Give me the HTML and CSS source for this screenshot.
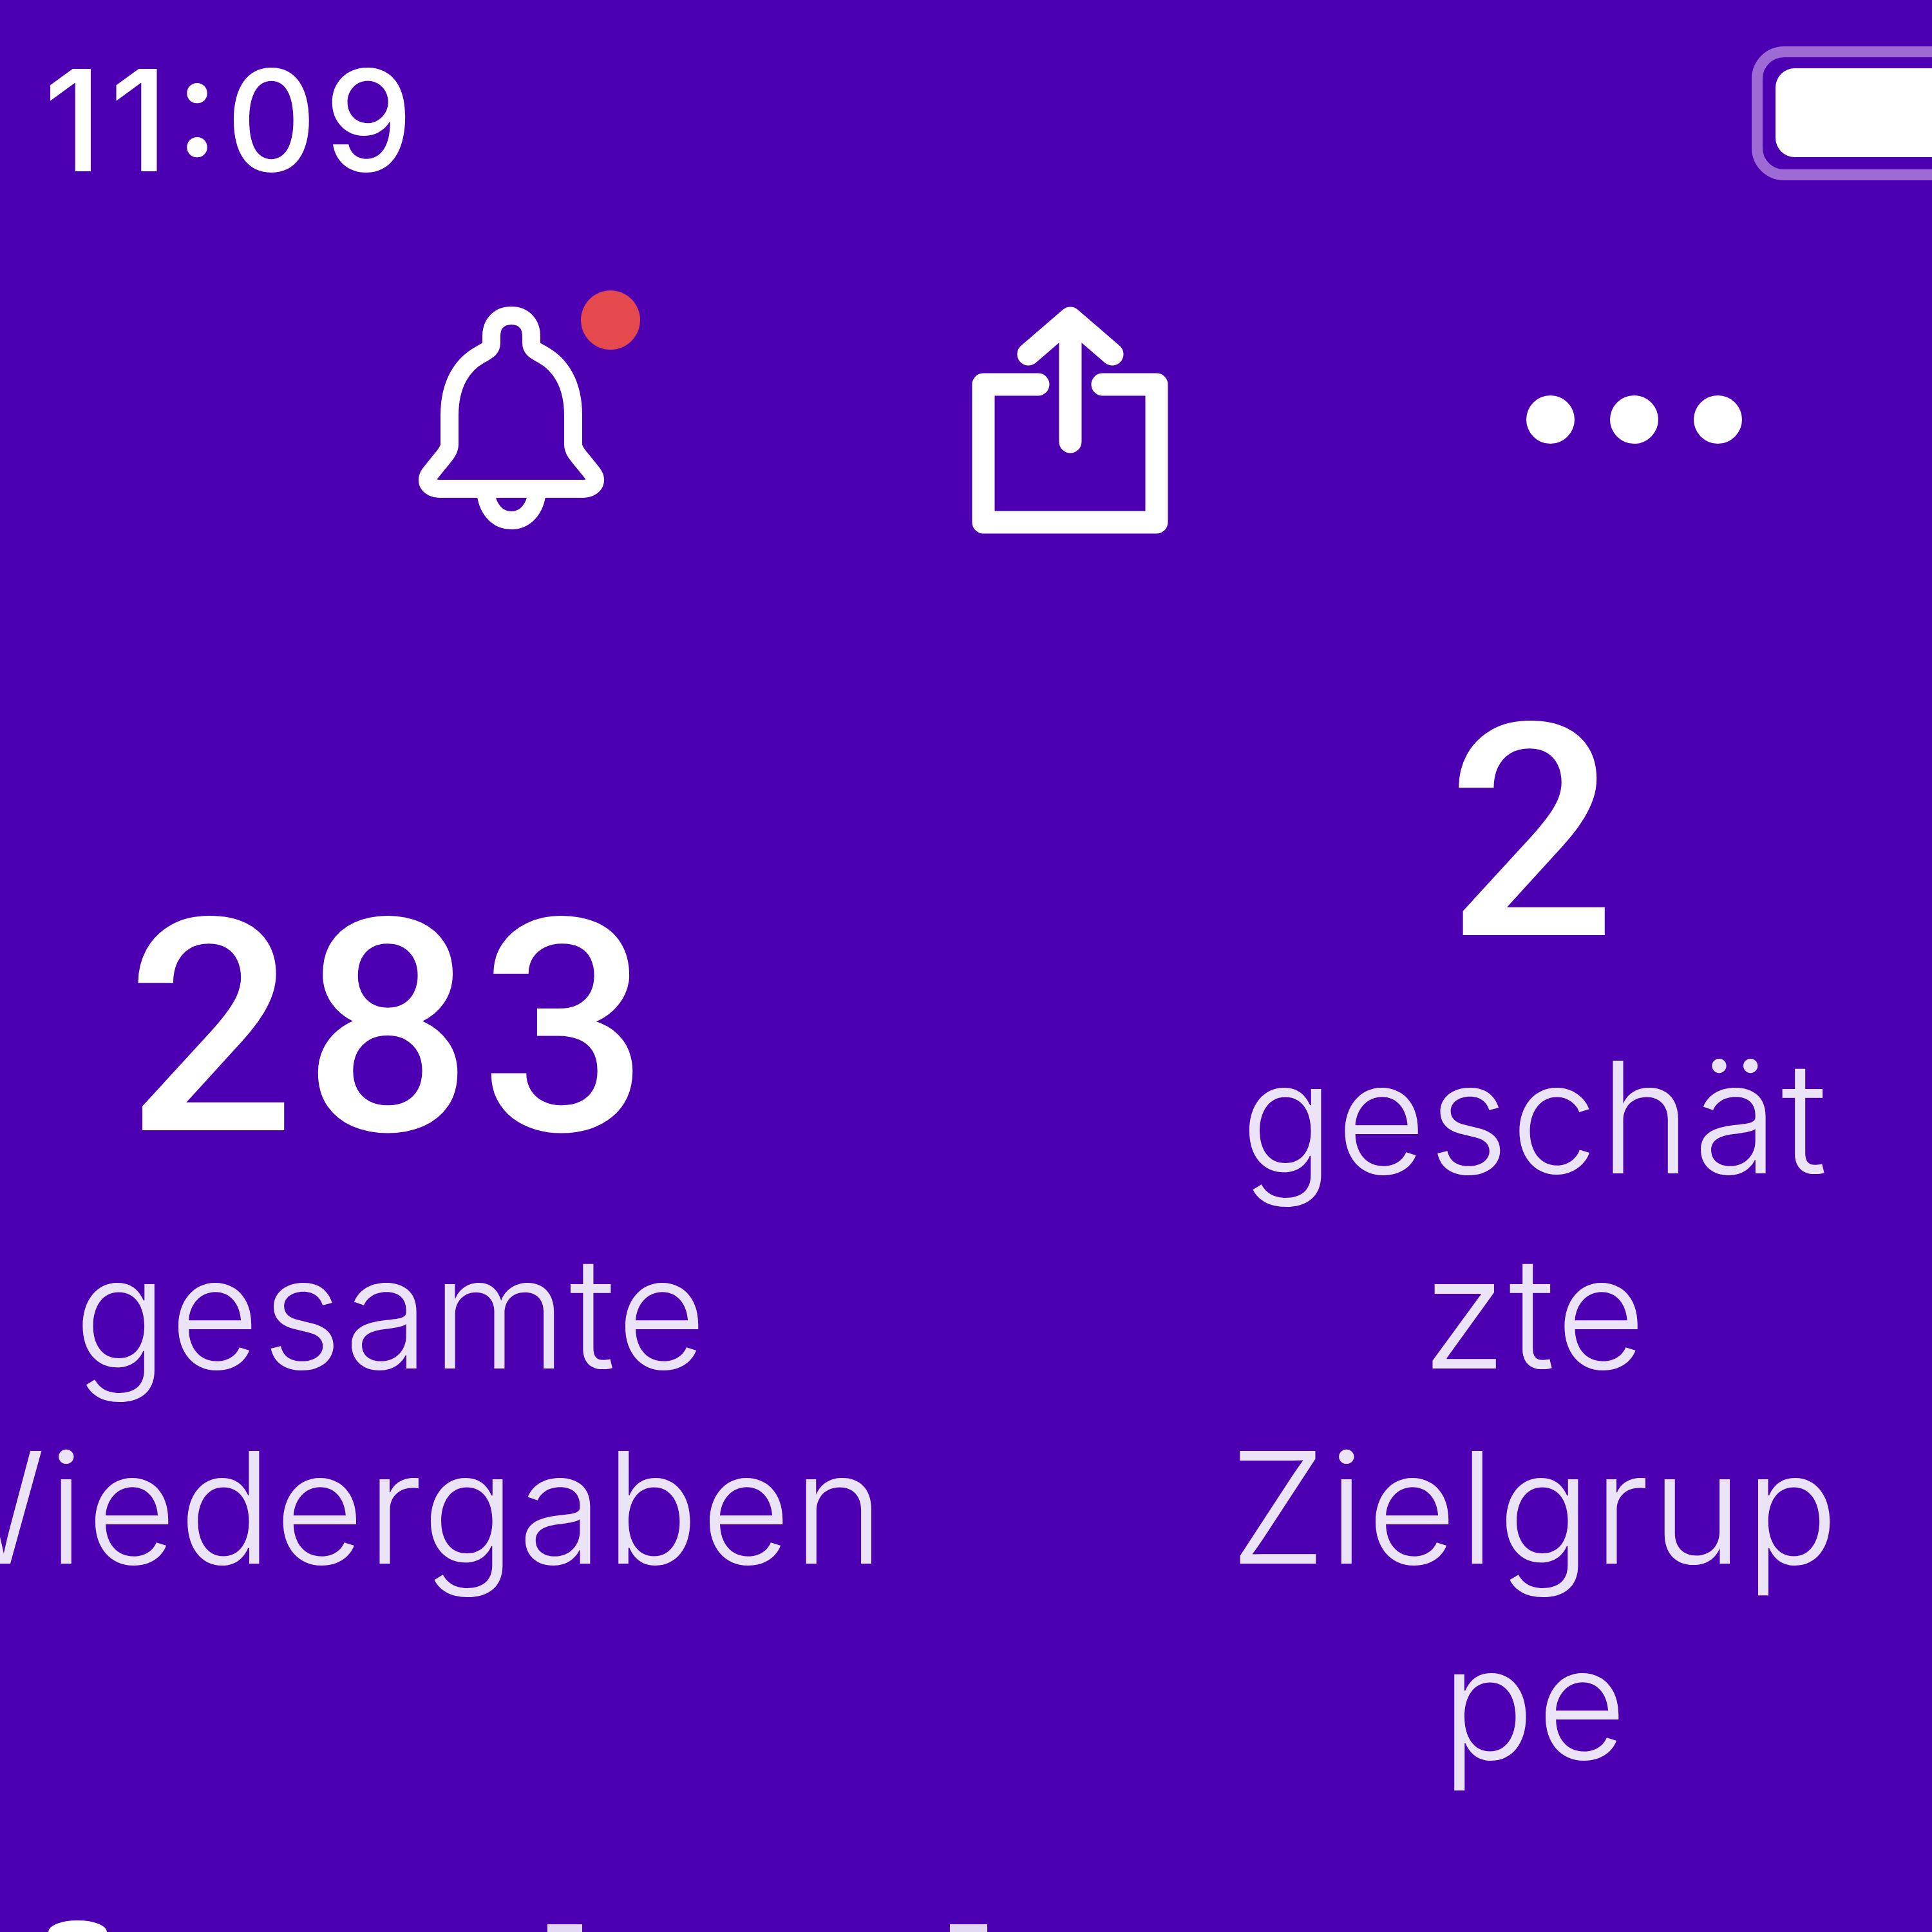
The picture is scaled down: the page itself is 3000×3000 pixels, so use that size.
FILE: index.html
```html
<!DOCTYPE html>
<html lang="de">
<head>
<meta charset="utf-8">
<title>Statistik</title>
<link rel="stylesheet" href="styles.css">
</head>
<body>
<main class="page">
  <header class="status">
    <span class="time">11:09</span>
    <div class="battery"><div class="battery-fill"></div></div>
  </header>
  <nav class="actions">
    <div class="bell">
      <svg class="icon" width="300" height="350" viewBox="650 476 300 350" aria-hidden="true">
        <path d="M794 490C813 490 825 503 825 522V532C825 543 833 545 843 551C870 566 890 596 890 645V690C890 700 898 708 908 720L920 735C930 748 920 759 906 759H682C668 759 658 748 668 735L680 720C690 708 698 700 698 690V645C698 596 718 566 745 551C755 545 763 543 763 532V522C763 503 775 490 794 490Z"/>
        <path d="M754 762C756 790 772 808 794 808C816 808 832 790 834 762"/>
      </svg>
      <span class="badge"></span>
    </div>
    <svg class="icon icon-share" width="320" height="370" viewBox="1500 466 320 370" aria-hidden="true">
      <path d="M1612 597H1527V811H1796V597H1712"/>
      <path d="M1662 686V496"/>
      <path d="M1597 550L1662 494L1727 550"/>
    </svg>
    <div class="dots"><span></span><span></span><span></span></div>
  </nav>
  <section class="stats">
    <div class="stat">
      <span class="value">283</span>
      <span class="label">gesamte</span>
      <span class="label">Wiedergaben</span>
    </div>
    <div class="stat">
      <span class="value">2</span>
      <span class="label">geschät</span>
      <span class="label">zte</span>
      <span class="label">Zielgrup</span>
      <span class="label">pe</span>
    </div>
  </section>
  <div class="peek">
    <span class="peek-a"></span>
    <span class="peek-b"></span>
    <span class="peek-c"></span>
  </div>
</main>
</body>
</html>
```
FILE: styles.css
```css
* { box-sizing: border-box; }
html, body { margin: 0; padding: 0; background: #4c00b2; }
.page {
  width: 3000px;
  height: 3000px;
  overflow: hidden;
  display: flex;
  flex-direction: column;
  background: #4c00b2;
  color: #fff;
  font-family: Inter, "Open Sans", sans-serif;
}
.status {
  height: 280px;
  display: flex;
  justify-content: space-between;
  align-items: flex-start;
  padding-left: 68px;
}
.time {
  font-family: Inter, "Liberation Sans", sans-serif;
  font-feature-settings: "case" 1;
  font-size: 218px;
  font-weight: 500;
  line-height: 374px;
  height: 280px;
  letter-spacing: 12px;
}
.battery {
  width: 280px;
  height: 208px;
  margin-top: 72px;
  padding: 17px 0 19px 20px;
  border: 17px solid #9d6bd3;
  border-right: 0;
  border-radius: 50px 0 0 50px;
}
.battery-fill {
  height: 100%;
  background: #fff;
  border-radius: 30px 0 0 30px;
}
.actions {
  margin-top: 186px;
  height: 370px;
  padding-left: 650px;
  display: flex;
  align-items: center;
  gap: 550px;
}
.bell { position: relative; height: 350px; }
.icon {
  display: block;
  flex: none;
  fill: none;
  stroke: #fff;
  stroke-width: 28;
  stroke-linecap: round;
  stroke-linejoin: round;
}
.icon-share { stroke-width: 35; }
.badge {
  position: absolute;
  left: 252px;
  top: -25px;
  width: 92px;
  height: 92px;
  border-radius: 50%;
  background: #e5484d;
}
.dots { display: flex; gap: 55px; }
.dots span {
  width: 75px;
  height: 75px;
  border-radius: 50%;
  background: #fff;
}
.stats {
  margin-top: 218px;
  display: grid;
  grid-template-columns: 1216px 1000px;
  column-gap: 668px;
  align-items: center;
}
.stat {
  display: flex;
  flex-direction: column;
  align-items: center;
}
.value {
  font-family: Roboto, Inter, sans-serif;
  font-size: 462px;
  font-weight: 500;
  line-height: 480px;
  letter-spacing: 12px;
  margin-bottom: 49px;
  flex: none;
}
.label {
  font-size: 240px;
  font-weight: 300;
  line-height: 303px;
  letter-spacing: 4px;
  color: #ebe3f6;
  white-space: nowrap;
  flex: none;
}
.peek {
  margin-top: auto;
  padding-left: 75px;
  display: flex;
  align-items: flex-end;
}
.peek-a {
  width: 91px;
  height: 18px;
  background: #fff;
  border-radius: 45px 45px 0 0 / 18px 18px 0 0;
}
.peek-b {
  width: 54px;
  height: 12px;
  margin-left: 684px;
  background: #e3d8f3;
}
.peek-c {
  width: 58px;
  height: 12px;
  margin-left: 571px;
  background: #e3d8f3;
}
```
